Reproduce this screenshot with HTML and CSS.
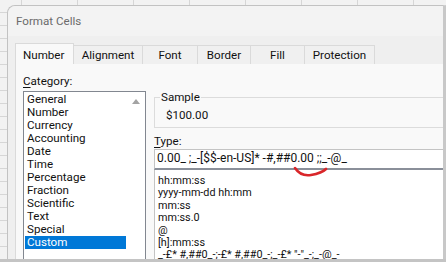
FILE: index.html
```html
<!DOCTYPE html>
<html lang="en">
<head>
    <meta charset="UTF-8">
    <meta name="viewport" content="width=device-width, initial-scale=1.0">
    <title>Format Cells</title>
    <link rel="stylesheet" href="styles.css">
</head>
<body>
    <div class="desk">
        <div class="dialog">
            <div class="titlebar">Format Cells</div>
            <div class="dialog-body">
                <div class="tabs">
                    <div class="tab active">Number</div>
                    <div class="tab">Alignment</div>
                    <div class="tab">Font</div>
                    <div class="tab">Border</div>
                    <div class="tab">Fill</div>
                    <div class="tab">Protection</div>
                </div>
                <div class="panel">
                    <div class="left-col">
                        <div class="label"><u>C</u>ategory:</div>
                        <div class="listbox">
                            <ul class="categories">
                                <li>General</li>
                                <li>Number</li>
                                <li>Currency</li>
                                <li>Accounting</li>
                                <li>Date</li>
                                <li>Time</li>
                                <li>Percentage</li>
                                <li>Fraction</li>
                                <li>Scientific</li>
                                <li>Text</li>
                                <li>Special</li>
                                <li class="selected">Custom</li>
                            </ul>
                            <div class="scrollbar">
                                <span class="arrow-up"></span>
                            </div>
                        </div>
                    </div>
                    <div class="right-col">
                        <fieldset class="sample">
                            <legend>Sample</legend>
                            <div class="sample-value">$100.00</div>
                        </fieldset>
                        <div class="label type-label"><u>T</u>ype:</div>
                        <div class="type-input">0.00_ ;_-[$$-en-US]* -#,##0.00 ;;_-@_</div>
                        <ul class="formats">
                            <li>hh:mm:ss</li>
                            <li>yyyy-mm-dd hh:mm</li>
                            <li>mm:ss</li>
                            <li>mm:ss.0</li>
                            <li>@</li>
                            <li>[h]:mm:ss</li>
                            <li>_-£* #,##0_-;-£* #,##0_-;_-£* "-"_-;_-@_-</li>
                        </ul>
                    </div>
                </div>
            </div>
        </div>
        <svg class="scribble" width="40" height="14" viewBox="290 164 40 14">
            <path d="M295 168 C299 174 305 176 311 175 C317 174 322 173 326 169" fill="none" stroke="#d9262a" stroke-width="2.6" stroke-linecap="round"/>
        </svg>
    </div>
</body>
</html>
```

FILE: styles.css
```css
* {
    box-sizing: border-box;
}
body {
    margin: 0;
    font-family: Roboto, "Noto Sans", sans-serif;
    font-size: 11.6px;
    color: #111;
}
.desk {
    position: relative;
    width: 446px;
    height: 262px;
    overflow: hidden;
    background-color: #f2f2f2;
    background-image:
        repeating-linear-gradient(to right, transparent 0, transparent 21px, #d6d6d6 21px, #d6d6d6 22px, transparent 22px, transparent 56px),
        repeating-linear-gradient(to bottom, transparent 0, transparent 12px, #d6d6d6 12px, #d6d6d6 13px);
    border-bottom: 3px solid #c4c4c4;
    padding: 5px 0 0 7px;
}
.dialog {
    height: 100%;
    background: #efefef;
    border-top: 1px solid #c2c2c2;
    border-left: 1px solid #c2c2c2;
    border-right: 3px solid #c8c8c8;
    border-top-left-radius: 8px;
    display: flex;
    flex-direction: column;
}
.titlebar {
    height: 30px;
    flex: none;
    background: #f3f3f3;
    border-top-left-radius: 8px;
    color: #6b6b6b;
    padding: 8px 0 0 8px;
    line-height: 14px;
}
.dialog-body {
    flex: 1;
    padding: 7px 0 0 7px;
    display: flex;
    flex-direction: column;
}
.tabs {
    display: flex;
    align-items: flex-end;
    height: 21px;
    flex: none;
}
.tab {
    height: 19px;
    border: 1px solid #dadada;
    border-bottom: none;
    border-left: none;
    background: #f0f0f0;
    text-align: center;
    line-height: 14px;
    padding-top: 2px;
}
.tab.active {
    height: 21px;
    padding-top: 4px;
    background: #f9f9f9;
    border-left: 1px solid #dadada;
    padding-left: 7px;
    text-align: left;
    width: 59px;
}
.tab:nth-child(2) { width: 69px; }
.tab:nth-child(3) { width: 55px; }
.tab:nth-child(4) { width: 53px; }
.tab:nth-child(5) { width: 54px; }
.tab:nth-child(6) { width: 70px; }
.panel {
    flex: 1;
    background: #f9f9f9;
    border-left: 1px solid #dadada;
    display: flex;
    padding: 10px 0 0 7px;
    min-height: 0;
}
.label {
    line-height: 14px;
}
.label u {
    text-decoration-thickness: 1px;
    text-underline-offset: 2px;
}
.left-col {
    width: 131px;
    flex: none;
    display: flex;
    flex-direction: column;
}
.left-col .label {
    height: 17px;
}
.listbox {
    flex: 1;
    width: 123px;
    border: 1px solid #828790;
    border-bottom: none;
    background: #fff;
    display: flex;
    padding: 0 0 0 1px;
}
.categories {
    list-style: none;
    margin: 0;
    padding: 1px 0 0 0;
    width: 101px;
}
.categories li {
    height: 13px;
    line-height: 13px;
    padding-left: 2px;
}
.categories li.selected {
    background: #0078d7;
    color: #fff;
}
.scrollbar {
    flex: 1;
    display: flex;
    justify-content: center;
    padding-top: 7px;
}
.arrow-up {
    width: 0;
    height: 0;
    border-left: 4px solid transparent;
    border-right: 4px solid transparent;
    border-bottom: 5px solid #a3a3a3;
}
.right-col {
    flex: 1;
    display: flex;
    flex-direction: column;
    min-width: 0;
    padding-top: 16px;
}
.sample {
    margin: 0;
    height: 38px;
    border: 1px solid #dcdcdc;
    border-right: none;
    padding: 0 0 0 11px;
}
.sample legend {
    padding: 0 1px;
    margin-left: -6px;
    line-height: 14px;
}
.sample-value {
    line-height: 14px;
    padding-top: 4px;
}
.type-label {
    margin-top: 6px;
    height: 14px;
}
.type-input {
    margin-top: 1px;
    height: 21px;
    flex: none;
    background: #fff;
    border-top: 1px solid #c4c4c4;
    border-left: 1px solid #c4c4c4;
    border-bottom: 2px solid #8a8f99;
    padding: 0 0 0 2px;
    font-size: 12px;
    line-height: 17px;
    white-space: nowrap;
}
.formats {
    flex: 1;
    list-style: none;
    margin: 0;
    padding: 5px 0 0 3px;
    background: #fff;
    border-left: 1px solid #c4c4c4;
    white-space: nowrap;
    overflow: hidden;
    font-size: 10.8px;
}
.formats li {
    height: 12.4px;
    line-height: 12.4px;
}
.scribble {
    position: absolute;
    left: 290px;
    top: 164px;
}
```
